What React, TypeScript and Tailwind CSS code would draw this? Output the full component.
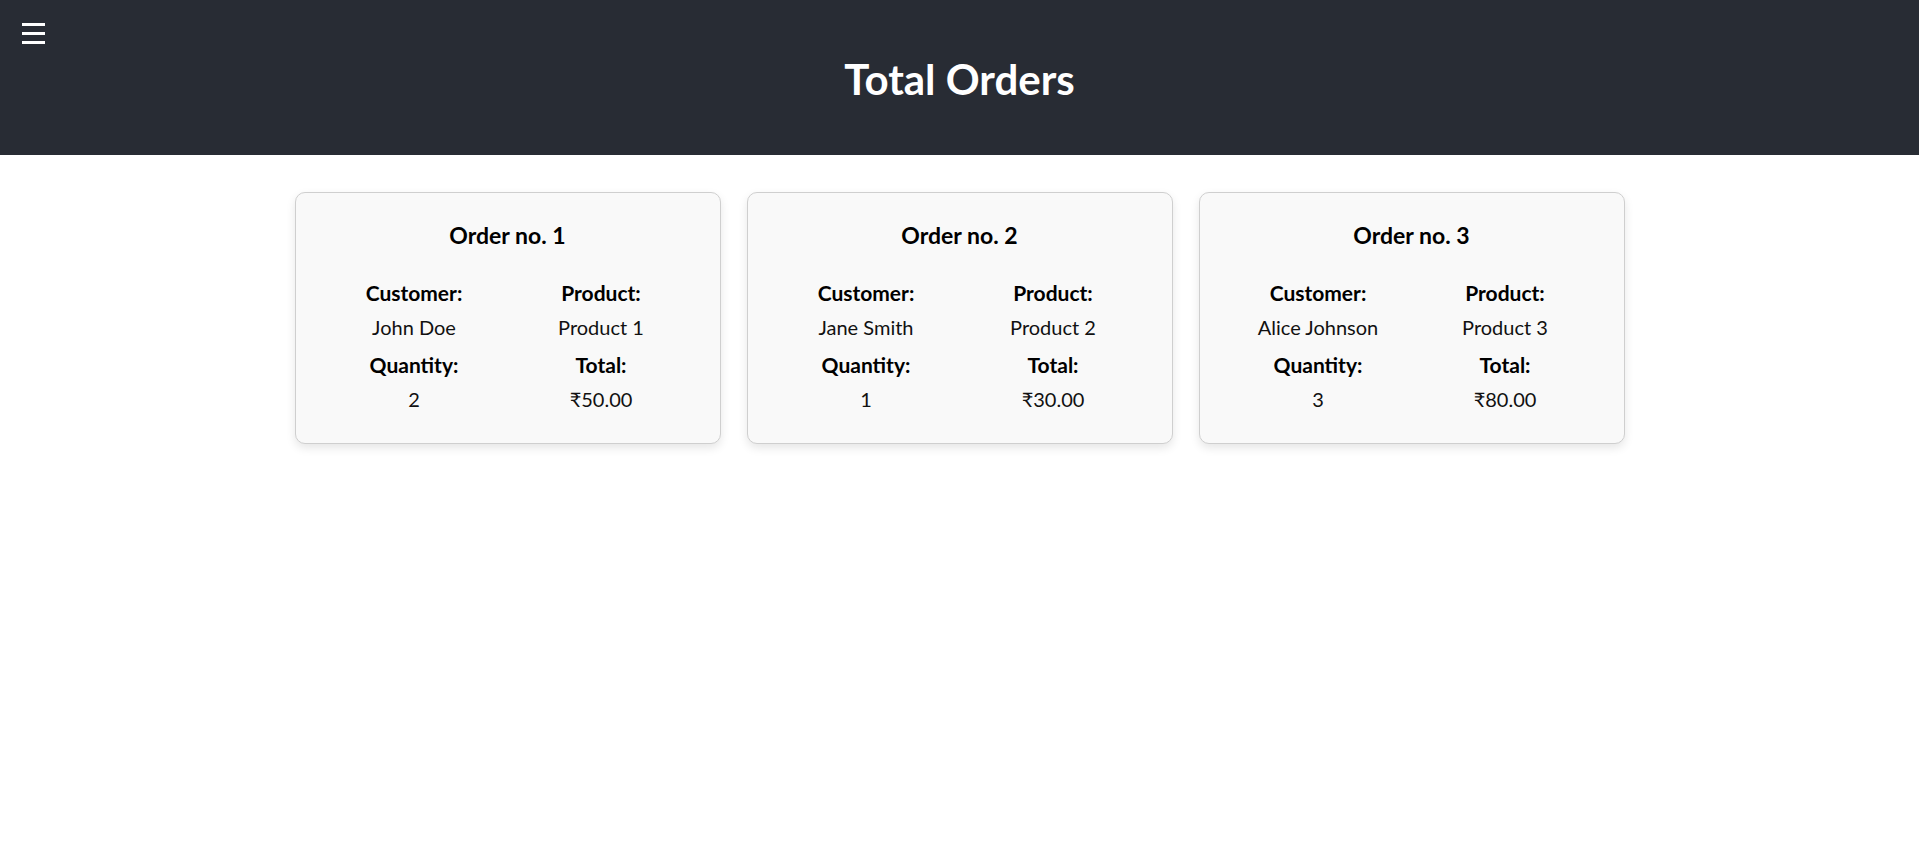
import React from "react";

const orders = [
  { id: 1, customer: "John Doe", product: "Product 1", quantity: 2, total: "₹50.00" },
  { id: 2, customer: "Jane Smith", product: "Product 2", quantity: 1, total: "₹30.00" },
  { id: 3, customer: "Alice Johnson", product: "Product 3", quantity: 3, total: "₹80.00" },
];

function Field({ label, value }: { label: string; value: React.ReactNode }) {
  return (
    <div className="flex flex-col items-center">
      <div className="text-[21px] leading-[26px] font-bold text-black">{label}</div>
      <div className="mt-[8px] text-[20px] leading-[26px] text-[#111]">{value}</div>
    </div>
  );
}

export default function App() {
  return (
    <div className="min-h-[850px] bg-white" style={{ fontFamily: "Lato, 'Noto Sans', sans-serif" }}>
      <header className="relative h-[155px] bg-[#282c34] flex justify-center">
        <button className="absolute left-[22px] top-[23px] w-[23px] h-[21px] flex flex-col justify-between" aria-label="menu">
          <span className="block h-[3px] w-[23px] bg-white" />
          <span className="block h-[3px] w-[23px] bg-white" />
          <span className="block h-[3px] w-[23px] bg-white" />
        </button>
        <h1 className="mt-[54px] text-[42px] leading-[50px] font-bold text-white">Total Orders</h1>
      </header>
      <main className="flex justify-center gap-[26px] pt-[37px]">
        {orders.map((o) => (
          <div
            key={o.id}
            className="w-[426px] rounded-[10px] border border-[#cfcfcf] bg-[#f9f9f9] px-[25px] pt-[28px] pb-[31px] shadow-[0_4px_10px_rgba(0,0,0,0.1)]"
          >
            <h3 className="text-center text-[23px] leading-[28px] font-bold text-black">Order no. {o.id}</h3>
            <div className="mt-[31px] grid grid-cols-2 gap-y-[12px]">
              <Field label="Customer:" value={o.customer} />
              <Field label="Product:" value={o.product} />
              <Field label="Quantity:" value={o.quantity} />
              <Field label="Total:" value={o.total} />
            </div>
          </div>
        ))}
      </main>
    </div>
  );
}
